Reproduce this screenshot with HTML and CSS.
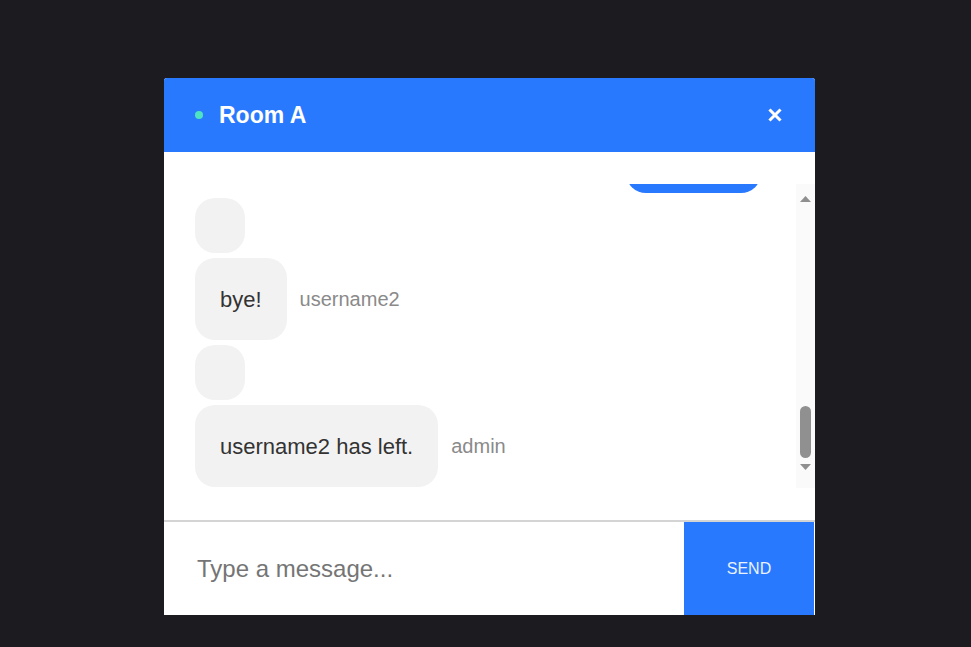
FILE: index.html
```html
<!DOCTYPE html>
<html lang="en">
<head>
<meta charset="utf-8">
<title>Room A</title>
<link rel="stylesheet" href="styles.css">
</head>
<body>
<div class="page">
  <div class="chat">
    <header class="chat-header">
      <span class="status-dot"></span>
      <h1 class="room-title">Room A</h1>
      <button class="close-btn" aria-label="Close">
        <svg width="14" height="14" viewBox="0 0 14 14"><path d="M2.5 2.5 L11.5 11.5 M11.5 2.5 L2.5 11.5" stroke="#ffffff" stroke-width="3" stroke-linecap="square" fill="none"/></svg>
      </button>
    </header>
    <section class="messages-area">
      <div class="scroller">
        <div class="messages">
          <div class="row own"><div class="bubble"></div></div>
          <div class="row"><div class="bubble empty"></div></div>
          <div class="row"><div class="bubble">bye!</div><span class="author">username2</span></div>
          <div class="row"><div class="bubble empty"></div></div>
          <div class="row"><div class="bubble">username2 has left.</div><span class="author">admin</span></div>
        </div>
      </div>
      <div class="scrollbar" aria-hidden="true">
        <div class="sb-btn sb-up">
          <svg width="11" height="6" viewBox="0 0 11 6"><path d="M5.5 0 L11 6 L0 6 Z" fill="#8f8f8f"/></svg>
        </div>
        <div class="sb-track"><div class="sb-thumb"></div></div>
        <div class="sb-btn sb-down">
          <svg width="11" height="6" viewBox="0 0 11 6"><path d="M0 0 L11 0 L5.5 6 Z" fill="#8f8f8f"/></svg>
        </div>
      </div>
    </section>
    <form class="composer">
      <input class="composer-input" type="text" placeholder="Type a message...">
      <button class="send-btn" type="button">SEND</button>
    </form>
  </div>
</div>
</body>
</html>
```

FILE: styles.css
```css
html, body {
  margin: 0;
  padding: 0;
  background: #1c1b20;
  font-family: "Liberation Sans", Arial, sans-serif;
}

.page {
  padding: 78px 0 0 164px;
  height: 647px;
  box-sizing: border-box;
}

.chat {
  width: 651px;
  background: #ffffff;
  border-radius: 3px 3px 0 0;
  overflow: hidden;
  display: flex;
  flex-direction: column;
}

.chat-header {
  height: 74px;
  background: #2979ff;
  display: flex;
  align-items: center;
  padding: 0 33px 0 31px;
}

.status-dot {
  width: 8px;
  height: 8px;
  border-radius: 50%;
  background: #4fe3c1;
  margin-right: 16px;
}

.room-title {
  margin: 0;
  font-size: 23px;
  font-weight: bold;
  color: #ffffff;
  flex: 1;
}

.close-btn {
  background: none;
  border: 0;
  padding: 0;
  width: 14px;
  height: 14px;
  display: flex;
}

.messages-area {
  padding: 32px 0;
  display: flex;
}

.scroller {
  flex: 1;
  height: 304px;
  overflow: hidden;
  display: flex;
  flex-direction: column-reverse;
}

.messages {
  display: flex;
  flex-direction: column;
  gap: 5px;
  padding: 0 35px 1px 31px;
}

.row {
  display: flex;
  align-items: center;
}

.row.own {
  justify-content: flex-end;
}

.bubble {
  background: #f2f2f2;
  color: #333333;
  font-size: 22px;
  line-height: 27px;
  padding: 27.5px 25px;
  border-radius: 20px;
  white-space: nowrap;
}

.bubble.empty {
  height: 0;
}

.row.own .bubble {
  background: #2979ff;
  color: #ffffff;
  width: 85px;
  height: 27px;
}

.author {
  margin-left: 13px;
  font-size: 20px;
  color: #8a8a8a;
}

.scrollbar {
  width: 19px;
  height: 304px;
  background: #fafafa;
  display: flex;
  flex-direction: column;
}

.sb-btn {
  height: 30px;
  display: flex;
  justify-content: center;
}

.sb-up {
  align-items: center;
}

.sb-down {
  align-items: flex-start;
  padding-top: 6px;
  box-sizing: border-box;
}

.sb-track {
  flex: 1;
  display: flex;
  flex-direction: column;
  justify-content: flex-end;
  align-items: center;
}

.sb-thumb {
  width: 11px;
  height: 52px;
  border-radius: 6px;
  background: #909090;
}

.composer {
  margin: 0;
  display: flex;
  height: 93px;
  border-top: 2px solid #d4d4d4;
  padding-right: 1px;
}

.composer-input {
  flex: 1;
  border: 0;
  outline: none;
  padding: 0 0 0 33px;
  font-family: "Liberation Sans", Arial, sans-serif;
  font-size: 24px;
  color: #333333;
  background: #ffffff;
}

.composer-input::placeholder {
  color: #757575;
}

.send-btn {
  width: 130px;
  border: 0;
  background: #2979ff;
  color: #eaf2ff;
  font-family: "Liberation Sans", Arial, sans-serif;
  font-size: 16px;
}
```
